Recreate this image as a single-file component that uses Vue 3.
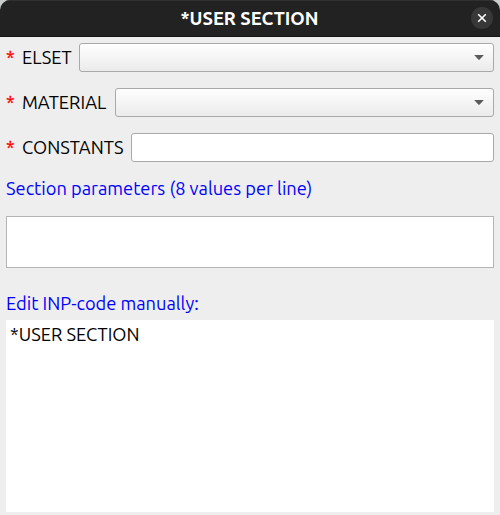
<script setup>
import { ref } from 'vue'

const rows = [
  { label: 'ELSET', kind: 'combo', cls: 'elset' },
  { label: 'MATERIAL', kind: 'combo', cls: 'material' },
  { label: 'CONSTANTS', kind: 'input', cls: 'constants' },
]
const code = ref('*USER SECTION')
</script>

<template>
  <div class="backdrop">
    <div class="dialog">
      <header class="titlebar">
        <span class="title">*USER SECTION</span>
        <button class="close" aria-label="Close">
          <svg width="22" height="22" viewBox="0 0 22 22">
            <path d="M7.2 7.2 L14.8 14.8 M14.8 7.2 L7.2 14.8" stroke="#fff" stroke-width="1.6" fill="none" />
          </svg>
        </button>
      </header>
      <main class="body">
        <div v-for="row in rows" :key="row.label" class="row">
          <span class="star">*</span>
          <span class="label" :class="row.cls">{{ row.label }}</span>
          <div class="field" :class="row.kind">
            <svg v-if="row.kind === 'combo'" width="10" height="7" viewBox="0 0 10 7">
              <path d="M0.2 1 H9.8 L5.7 5.5 Q5 6.2 4.3 5.5 Z" fill="#5b5b5b" />
            </svg>
          </div>
        </div>
        <div class="caption params">Section parameters (8 values per line)</div>
        <div class="values"></div>
        <div class="caption edit">Edit INP-code manually:</div>
        <div class="code">{{ code }}</div>
      </main>
    </div>
  </div>
</template>

<style>
body {
  margin: 0;
  overflow: hidden;
}
</style>

<style scoped>
.backdrop {
  width: 500px;
  height: 515px;
  background: #c9cccb;
  font-family: Ubuntu, "Noto Sans", "Open Sans", sans-serif;
  font-size: 18.25px;
  line-height: 24px;
  color: #000;
  white-space: nowrap;
}
.dialog {
  height: 515px;
  display: flex;
  flex-direction: column;
  border-radius: 10px 10px 0 0;
  overflow: hidden;
  background: #eee;
}
.titlebar {
  height: 37px;
  box-sizing: border-box;
  flex: none;
  display: grid;
  grid-template-columns: 1fr auto 1fr;
  align-items: center;
  padding: 0 7px 1px 6px;
  background: #222;
  border-top: 1px solid #303030;
  border-bottom: 1px solid #151515;
}
.title {
  grid-column: 2;
  font-weight: 700;
  font-size: 18.4px;
  color: #fff;
}
.close {
  grid-column: 3;
  justify-self: end;
  width: 22px;
  height: 22px;
  padding: 0;
  border: 0;
  border-radius: 50%;
  background: #383838;
}
.close svg {
  display: block;
}
.body {
  flex: 1;
  display: flex;
  flex-direction: column;
  padding: 6px 6px 3px;
}
.row {
  display: flex;
  align-items: center;
  height: 29px;
  margin-bottom: 16px;
}
.star {
  width: 15px;
  flex: none;
  padding-bottom: 1px;
  color: #f00;
  -webkit-text-stroke: 0.3px #f00;
}
.label {
  flex: none;
  display: block;
  box-sizing: border-box;
  padding: 0 0 1px 1px;
}
.elset {
  width: 58px;
}
.material {
  width: 94px;
}
.constants {
  width: 110px;
}
.field {
  flex: 1;
  height: 29px;
  box-sizing: border-box;
  border: 1px solid #a9a9a9;
  border-radius: 3px;
  background: #fff;
  display: flex;
  align-items: center;
  justify-content: flex-end;
  padding-right: 9px;
}
.combo {
  background: linear-gradient(#fefefe, #ebebeb);
}
.caption {
  color: #00f;
}
.params {
  margin-top: -2px;
  height: 40px;
}
.values {
  height: 52px;
  box-sizing: border-box;
  border: 1px solid #b5b5b5;
  background: #fff;
}
.edit {
  height: 29px;
  margin-top: 23px;
}
.code {
  flex: 1;
  background: #fff;
  padding: 2px 4px;
}
</style>
